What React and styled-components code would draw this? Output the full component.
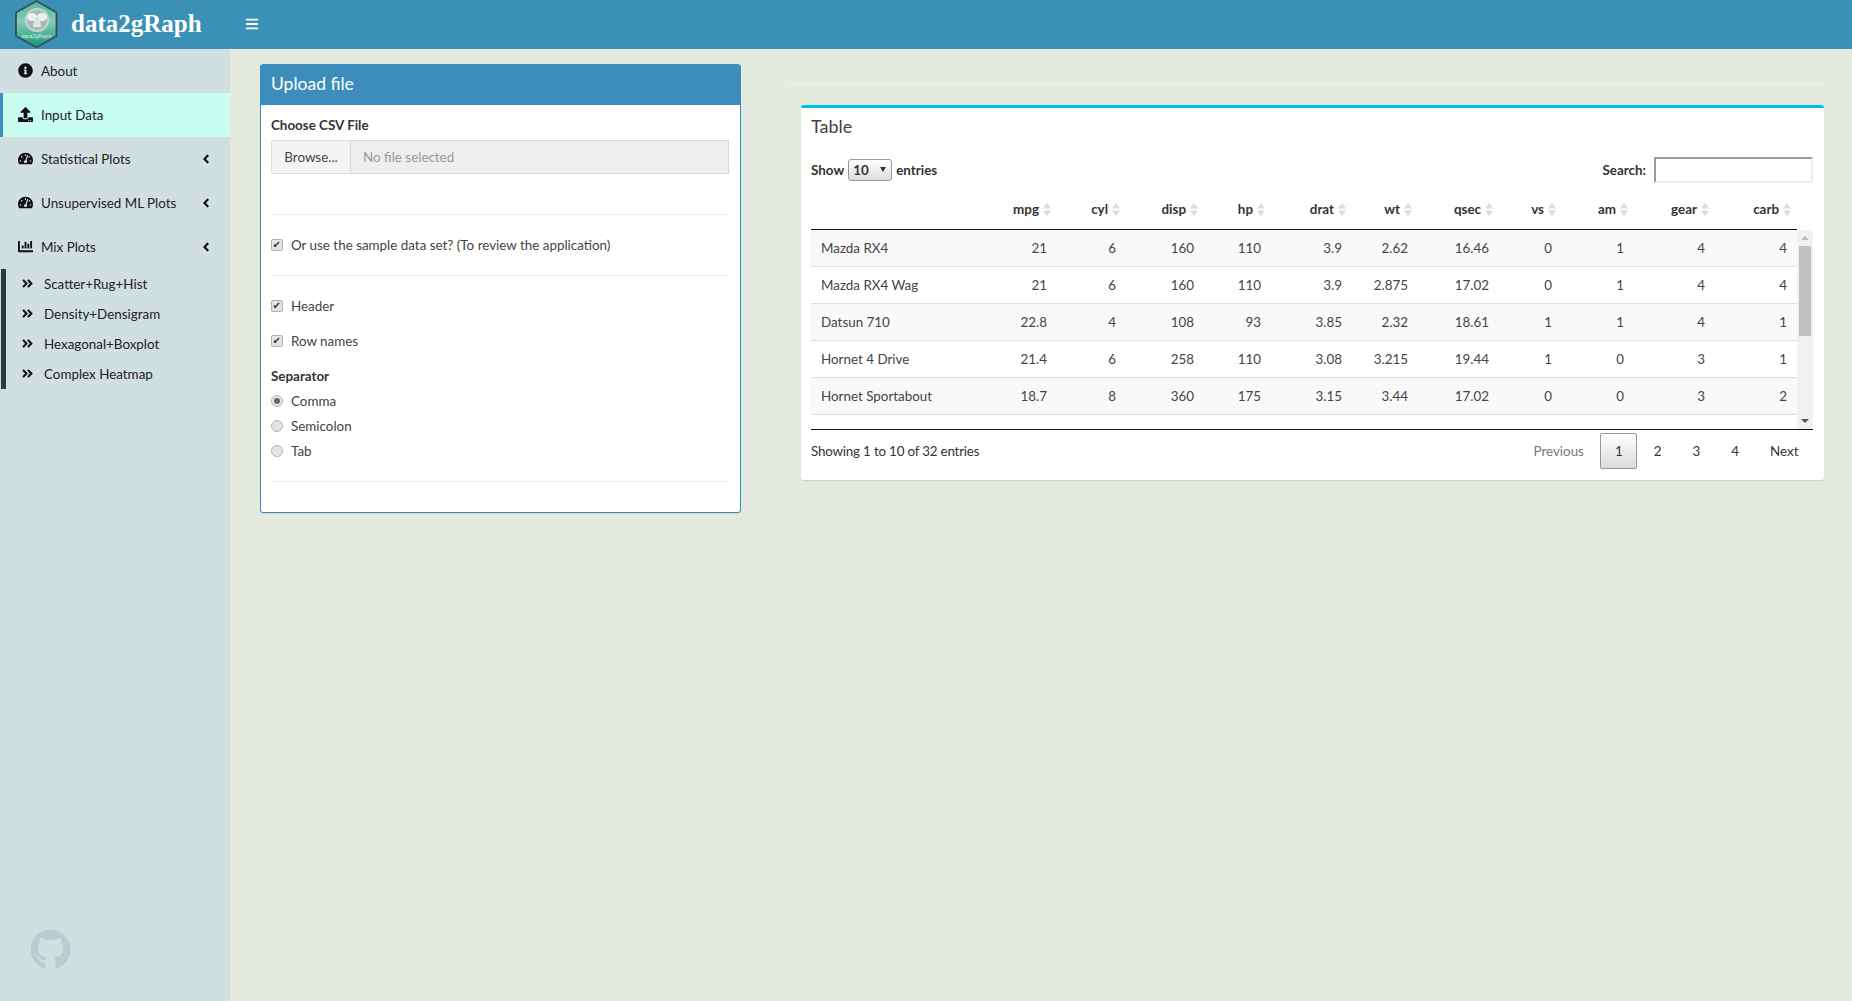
import React from 'react';
import styled, { createGlobalStyle } from 'styled-components';
import {
  FaInfoCircle,
  FaUpload,
  FaTachometerAlt,
  FaChartBar,
  FaAngleLeft,
  FaAngleDoubleRight,
  FaBars,
  FaGithub,
} from 'react-icons/fa';

const GlobalStyle = createGlobalStyle`
  html, body {
    margin: 0;
    height: 100%;
    overflow: hidden;
    background: #e5eadf;
    font-family: 'Lato', 'Noto Sans', sans-serif;
    font-size: 13.4px;
    color: #333;
  }
  * { box-sizing: border-box; }
`;

const columns = [
  { name: '', width: 180 },
  { name: 'mpg', width: 66 },
  { name: 'cyl', width: 69 },
  { name: 'disp', width: 78 },
  { name: 'hp', width: 67 },
  { name: 'drat', width: 81 },
  { name: 'wt', width: 66 },
  { name: 'qsec', width: 81 },
  { name: 'vs', width: 63 },
  { name: 'am', width: 72 },
  { name: 'gear', width: 81 },
  { name: 'carb', width: 82 },
];

const rows = [
  ['Mazda RX4', 21, 6, 160, 110, 3.9, 2.62, 16.46, 0, 1, 4, 4],
  ['Mazda RX4 Wag', 21, 6, 160, 110, 3.9, 2.875, 17.02, 0, 1, 4, 4],
  ['Datsun 710', 22.8, 4, 108, 93, 3.85, 2.32, 18.61, 1, 1, 4, 1],
  ['Hornet 4 Drive', 21.4, 6, 258, 110, 3.08, 3.215, 19.44, 1, 0, 3, 1],
  ['Hornet Sportabout', 18.7, 8, 360, 175, 3.15, 3.44, 17.02, 0, 0, 3, 2],
  ['Valiant', 18.1, 6, 225, 105, 2.76, 3.46, 20.22, 1, 0, 3, 1],
];

const App = () => (
  <>
    <GlobalStyle />
    <Page>
      <Header>
        <Brand>
          <Logo />
          <BrandName>data2gRaph</BrandName>
        </Brand>
        <Toggle><FaBars /></Toggle>
      </Header>
      <Body>
        <Sidebar>
          <MenuItem><FaInfoCircle /><span>About</span></MenuItem>
          <MenuItem $active><FaUpload /><span>Input Data</span></MenuItem>
          <MenuItem><FaTachometerAlt /><span>Statistical Plots</span><Caret><FaAngleLeft /></Caret></MenuItem>
          <MenuItem><FaTachometerAlt /><span>Unsupervised ML Plots</span><Caret><FaAngleLeft /></Caret></MenuItem>
          <MenuItem><FaChartBar /><span>Mix Plots</span><Caret><FaAngleLeft /></Caret></MenuItem>
          <SubMenu>
            {['Scatter+Rug+Hist', 'Density+Densigram', 'Hexagonal+Boxplot', 'Complex Heatmap'].map((label) => (
              <SubItem key={label}><FaAngleDoubleRight /><span>{label}</span></SubItem>
            ))}
          </SubMenu>
          <GithubLink><FaGithub /></GithubLink>
        </Sidebar>
        <Content>
          <UploadBox>
            <UploadTitle>Upload file</UploadTitle>
            <UploadBody>
              <FieldLabel>Choose CSV File</FieldLabel>
              <FileRow>
                <BrowseButton>Browse...</BrowseButton>
                <FileName>No file selected</FileName>
              </FileRow>
              <Rule $top={40} />
              <CheckRow $top={21}><Check type="checkbox" defaultChecked />Or use the sample data set? (To review the application)</CheckRow>
              <Rule $top={21} />
              <CheckRow $top={21}><Check type="checkbox" defaultChecked />Header</CheckRow>
              <CheckRow $top={17}><Check type="checkbox" defaultChecked />Row names</CheckRow>
              <FieldLabel $top={16}>Separator</FieldLabel>
              <CheckRow $top={6}><Radio type="radio" name="sep" defaultChecked />Comma</CheckRow>
              <CheckRow $top={7}><Radio type="radio" name="sep" />Semicolon</CheckRow>
              <CheckRow $top={7}><Radio type="radio" name="sep" />Tab</CheckRow>
              <Rule $top={21} />
            </UploadBody>
          </UploadBox>
          <TableColumn>
            <TopRule />
            <TableBox>
              <TableTitle>Table</TableTitle>
              <Controls>
                <Strong>Show <SelectWrap><Select defaultValue="10"><option>10</option><option>25</option><option>50</option></Select></SelectWrap> entries</Strong>
                <Strong>Search: <SearchInput /></Strong>
              </Controls>
              <HeadTable>
                <colgroup>{columns.map((c) => <Col key={c.name} $w={c.width} />)}</colgroup>
                <thead>
                  <tr>
                    {columns.map((c) => (
                      <HeadCell key={c.name}>
                        {c.name}
                        {c.name && <SortIcon />}
                      </HeadCell>
                    ))}
                  </tr>
                </thead>
              </HeadTable>
              <ScrollArea>
                <ScrollBody>
                  <BodyTable>
                    <colgroup>{columns.map((c) => <Col key={c.name} $w={c.width} />)}</colgroup>
                    <tbody>
                      {rows.map((row, i) => (
                        <Row key={row[0]} $odd={i % 2 === 0}>
                          {row.map((val, j) => <Cell key={j} $left={j === 0}>{val}</Cell>)}
                        </Row>
                      ))}
                    </tbody>
                  </BodyTable>
                </ScrollBody>
                <ScrollTrack>
                  <TrackArrow $up />
                  <TrackThumb />
                  <TrackArrow />
                </ScrollTrack>
              </ScrollArea>
              <Footer>
                <Info>Showing 1 to 10 of 32 entries</Info>
                <Pager>
                  <PageLink $muted>Previous</PageLink>
                  <PageLink $current>1</PageLink>
                  <PageLink>2</PageLink>
                  <PageLink>3</PageLink>
                  <PageLink>4</PageLink>
                  <PageLink>Next</PageLink>
                </Pager>
              </Footer>
            </TableBox>
          </TableColumn>
        </Content>
      </Body>
    </Page>
  </>
);

const Logo = () => (
  <svg width="46" height="49" viewBox="0 0 46 49">
    <defs>
      <linearGradient id="hexFill" x1="0" y1="0" x2="0" y2="1">
        <stop offset="0" stopColor="#4fb79c" />
        <stop offset="0.45" stopColor="#86cdb8" />
        <stop offset="1" stopColor="#0f937b" />
      </linearGradient>
      <radialGradient id="orb" cx="0.5" cy="0.5" r="0.5">
        <stop offset="0" stopColor="#8fb3a9" />
        <stop offset="0.75" stopColor="#a9bdb8" />
        <stop offset="1" stopColor="#d3dfdb" />
      </radialGradient>
    </defs>
    <polygon points="22.5,1 42.5,12.5 42.5,36 22.5,47.5 2,36 2,12.5" fill="url(#hexFill)" stroke="#3b4f50" strokeWidth="1.8" />
    <circle cx="23" cy="20" r="12" fill="url(#orb)" />
    <ellipse cx="18" cy="17" rx="5" ry="4" fill="#f2f6f4" opacity="0.9" />
    <ellipse cx="28" cy="17" rx="5" ry="4" fill="#f2f6f4" opacity="0.9" />
    <path d="M20 19h6l1 8h-8z" fill="#e6eeeb" opacity="0.85" />
    <text x="22.5" y="37.500" fontSize="5.5" textAnchor="middle" fill="#dcefe9" fontFamily="Liberation Sans">data2gRaph</text>
  </svg>
);

const SortIcon = () => (
  <SortGlyph viewBox="0 0 9 15">
    <polygon points="4.5,0 9,6.5 0,6.5" fill="#dcdcdc" />
    <polygon points="4.5,15 9,8.5 0,8.5" fill="#dcdcdc" />
  </SortGlyph>
);

const Page = styled.div`
  display: flex;
  flex-direction: column;
  width: 1852px;
  height: 1001px;
`;

const Header = styled.header`
  display: flex;
  align-items: center;
  height: 49px;
  flex: none;
  background: #3a90b5;
  color: #fff;
`;

const Brand = styled.div`
  display: flex;
  align-items: center;
  width: 230px;
  padding-left: 14px;
  gap: 11px;
`;

const BrandName = styled.span`
  padding-bottom: 2px;
  font-family: 'Liberation Serif', serif;
  font-weight: 700;
  font-size: 25px;
`;

const Toggle = styled.div`
  display: flex;
  margin-left: 15px;
  padding-bottom: 2px;
  font-size: 14px;
`;

const Body = styled.div`
  display: flex;
  flex: 1;
  min-height: 0;
`;

const Sidebar = styled.nav`
  display: flex;
  flex-direction: column;
  width: 230px;
  flex: none;
  background: #d1dfe0;
  color: #222;
`;

const MenuItem = styled.div`
  display: flex;
  align-items: center;
  height: 44px;
  flex: none;
  padding-bottom: 1px;
  padding-left: ${(p) => (p.$active ? '15px' : '18px')};
  border-left: ${(p) => (p.$active ? '3px solid #3c8dbc' : 'none')};
  background: ${(p) => (p.$active ? '#c9fdf0' : 'transparent')};
  svg { width: 15px; height: 15px; margin-right: 8px; color: #111; }
`;

const Caret = styled.span`
  display: flex;
  margin-left: auto;
  margin-right: 17px;
  svg { width: 14px; height: 14px; margin: 0; }
`;

const SubMenu = styled.div`
  display: flex;
  flex-direction: column;
  margin-left: 1px;
  border-left: 5px solid #2c3b41;
`;

const SubItem = styled.div`
  display: flex;
  align-items: center;
  height: 30px;
  padding-bottom: 1px;
  padding-left: 15px;
  svg { width: 13px; height: 13px; margin-right: 10px; color: #111; }
`;

const GithubLink = styled.div`
  display: flex;
  margin-top: auto;
  margin-bottom: 31px;
  padding-left: 30px;
  color: #bccad2;
  svg { width: 41px; height: 41px; }
`;

const Content = styled.main`
  display: flex;
  align-items: flex-start;
  flex: 1;
  padding: 15px 0 0 30px;
  gap: 60px;
`;

const UploadBox = styled.section`
  width: 481px;
  height: 449px;
  flex: none;
  background: #fff;
  border: 1px solid #3c8dbc;
  border-radius: 3px;
  box-shadow: 0 1px 1px rgba(0, 0, 0, 0.1);
`;

const UploadTitle = styled.h3`
  margin: 0;
  height: 40px;
  padding: 0 10px;
  font-size: 17.500px;
  font-weight: 400;
  line-height: 37px;
  color: #fff;
  background: #3c8dbc;
`;

const UploadBody = styled.div`
  padding: 10px;
`;

const FieldLabel = styled.div`
  margin-top: ${(p) => p.$top || 0}px;
  font-weight: 700;
  line-height: 20px;
`;

const FileRow = styled.div`
  display: flex;
  height: 34px;
  margin: 5px 1px 0 0;
`;

const BrowseButton = styled.div`
  display: flex;
  align-items: center;
  justify-content: center;
  width: 80px;
  color: #444;
  background: #f4f4f4;
  border: 1px solid #ddd;
  border-radius: 3px 0 0 3px;
`;

const FileName = styled.div`
  display: flex;
  align-items: center;
  flex: 1;
  padding-left: 12px;
  color: #999;
  background: #eee;
  border: 1px solid #d2d6de;
  border-left: 0;
`;

const Rule = styled.div`
  height: 1px;
  margin-top: ${(p) => p.$top}px;
  background: #eee;
`;

const CheckRow = styled.label`
  display: flex;
  align-items: center;
  height: 18px;
  margin-top: ${(p) => p.$top}px;
  color: #444;
`;

const Check = styled.input`
  appearance: none;
  position: relative;
  width: 12px;
  height: 12px;
  margin: 0 8px 0 0;
  flex: none;
  background: #e4e4e4;
  border: 1px solid #b0b0b0;
  border-radius: 2px;
  &:checked::after {
    content: '✔';
    position: absolute;
    top: -1px;
    left: 0.500px;
    font-family: 'DejaVu Sans', sans-serif;
    font-size: 10px;
    line-height: 12px;
    color: #333;
  }
`;

const Radio = styled.input`
  appearance: none;
  position: relative;
  width: 12px;
  height: 12px;
  margin: 0 8px 0 0;
  flex: none;
  background: #e4e4e4;
  border: 1px solid #b5b5b5;
  border-radius: 50%;
  &:checked::after {
    content: '';
    position: absolute;
    top: 2px;
    left: 2px;
    width: 6px;
    height: 6px;
    border-radius: 50%;
    background: #666;
  }
`;

const TableColumn = styled.div`
  display: flex;
  flex-direction: column;
  width: 1023px;
  flex: none;
`;

const TopRule = styled.div`
  height: 1px;
  margin: 20px -1px 20px -15px;
  background: #edf0ea;
`;

const TableBox = styled.section`
  height: 375px;
  padding: 0 10px;
  background: #fff;
  border-top: 3px solid #00c0ef;
  border-radius: 3px;
  box-shadow: 0 1px 1px rgba(0, 0, 0, 0.1);
`;

const TableTitle = styled.h3`
  margin: 0;
  padding-top: 8px;
  font-size: 18px;
  font-weight: 400;
  line-height: 20px;
  color: #444;
`;

const Controls = styled.div`
  display: flex;
  align-items: center;
  justify-content: space-between;
  width: 1002px;
  height: 27px;
  margin-top: 20px;
`;

const Strong = styled.label`
  display: flex;
  align-items: center;
  gap: 5px;
  font-weight: 700;
`;

const SelectWrap = styled.span`
  position: relative;
  display: inline-flex;
  margin: 0 -1px;
  &::after {
    content: '';
    position: absolute;
    top: 8px;
    right: 6px;
    border: 3.5px solid transparent;
    border-top: 5px solid #333;
    border-bottom: 0;
    pointer-events: none;
  }
`;

const Select = styled.select`
  appearance: none;
  width: 44px;
  height: 22px;
  padding: 0 0 0 4px;
  font: inherit;
  color: #333;
  background: linear-gradient(#fff, #ddd);
  border: 1px solid #999;
  border-radius: 3px;
`;

const SearchInput = styled.input`
  width: 159px;
  height: 26px;
  margin-left: 3px;
  padding: 0;
  background: #fff;
  border: 2px inset #eee;
`;

const HeadTable = styled.table`
  width: 986px;
  margin-top: 9px;
  border-collapse: collapse;
  table-layout: fixed;
  border-bottom: 1px solid #111;
`;

const Col = styled.col`
  width: ${(p) => p.$w}px;
`;

const HeadCell = styled.th`
  position: relative;
  height: 37px;
  padding: 0 18px 3px 0;
  font-weight: 700;
  text-align: right;
`;

const SortGlyph = styled.svg`
  position: absolute;
  top: 10px;
  right: 6px;
  width: 8px;
  height: 15px;
`;

const ScrollArea = styled.div`
  display: flex;
  height: 200px;
  width: 1002px;
  border-bottom: 1px solid #111;
`;

const ScrollBody = styled.div`
  width: 986px;
  height: 197px;
  flex: none;
  overflow: hidden;
`;

const BodyTable = styled.table`
  width: 986px;
  border-collapse: collapse;
  table-layout: fixed;
`;

const Row = styled.tr`
  background: ${(p) => (p.$odd ? '#f9f9f9' : '#fff')};
`;

const Cell = styled.td`
  height: 37px;
  padding: 0 10px;
  text-align: ${(p) => (p.$left ? 'left' : 'right')};
  color: #444;
  border-bottom: 1px solid #ddd;
`;

const ScrollTrack = styled.div`
  display: flex;
  flex-direction: column;
  width: 16px;
  background: #f1f1f1;
`;

const TrackArrow = styled.div`
  width: 0;
  height: 0;
  margin: ${(p) => (p.$up ? '6px' : 'auto')} 4px 6px;
  border: 4px solid transparent;
  ${(p) => (p.$up ? 'border-bottom: 4px solid #bbb; border-top: 0;' : 'border-top: 4px solid #555; border-bottom: 0;')}
`;

const TrackThumb = styled.div`
  height: 90px;
  margin: 0 2px;
  background: #c1c1c1;
`;

const Footer = styled.div`
  display: flex;
  align-items: center;
  justify-content: space-between;
  margin-top: 3px;
  width: 1002px;
`;

const Info = styled.span`
  letter-spacing: -0.2px;
`;

const Pager = styled.div`
  display: flex;
  align-items: center;
`;

const PageLink = styled.a`
  display: flex;
  align-items: center;
  height: 36px;
  margin-left: 2px;
  padding: 0 13.500px;
  color: ${(p) => (p.$muted ? '#777' : '#333')};
  border: 1px solid ${(p) => (p.$current ? '#979797' : 'transparent')};
  border-radius: 2px;
  background: ${(p) => (p.$current ? 'linear-gradient(#fff, #dcdcdc)' : 'none')};
`;

export default App;
